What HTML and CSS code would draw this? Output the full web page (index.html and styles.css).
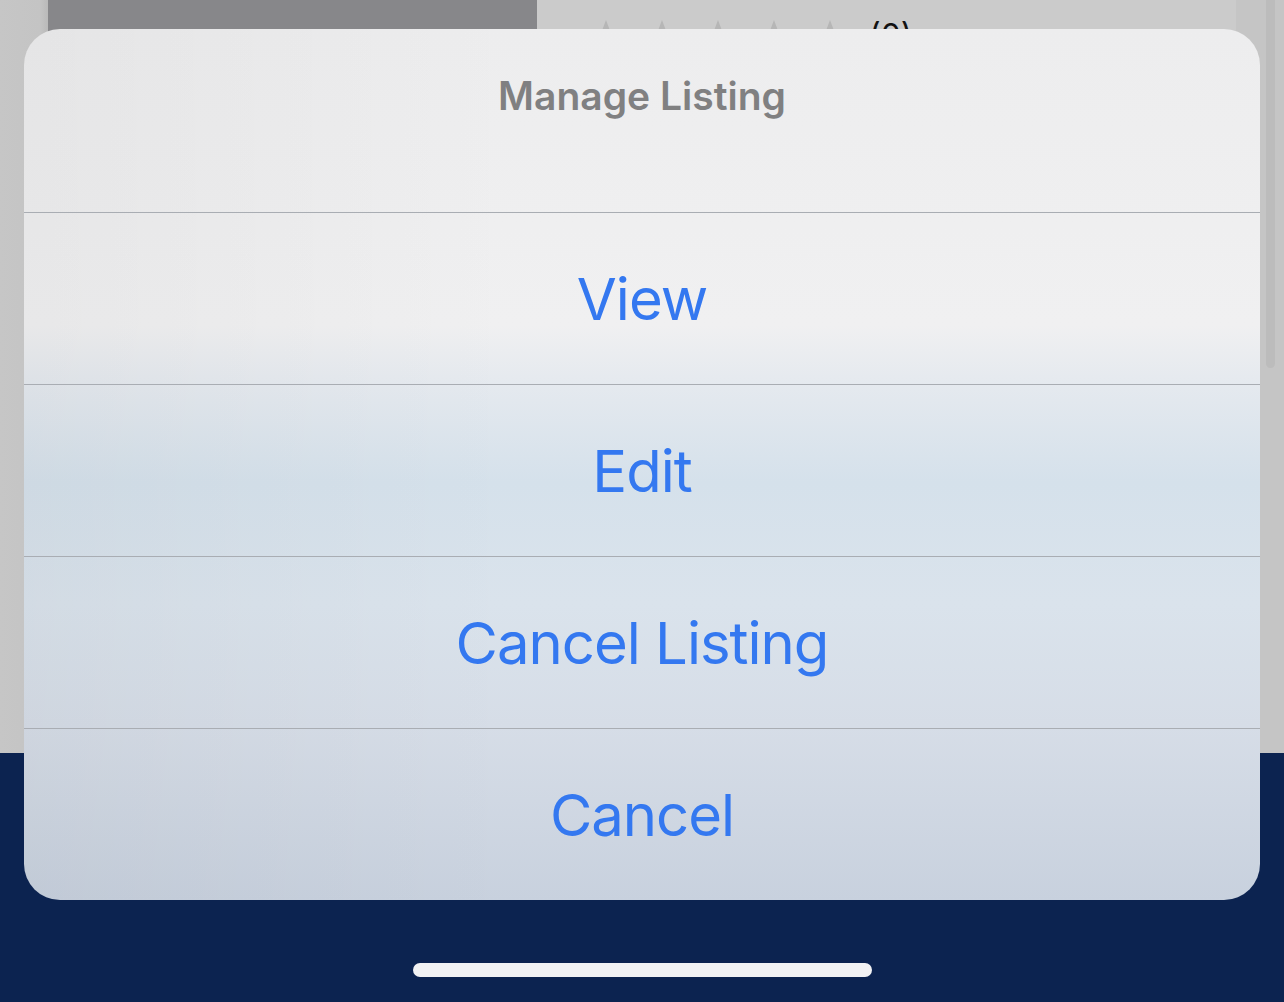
FILE: index.html
```html
<!DOCTYPE html>
<html lang="en">
<head>
  <meta charset="UTF-8">
  <meta name="viewport" content="width=device-width, initial-scale=1.0">
  <title>Manage Listing</title>
  <link rel="stylesheet" href="styles.css">
</head>
<body>
  <div class="screen">
    <div class="backdrop">
      <div class="photo"></div>
      <div class="details">
        <div class="rating">
          <svg class="star" viewBox="0 0 24 24"><path d="M12 0 L15.1 8.3 L24 8.7 L17 14.3 L19.4 23 L12 18 L4.6 23 L7 14.3 L0 8.7 L8.9 8.3 Z"/></svg>
          <svg class="star" viewBox="0 0 24 24"><path d="M12 0 L15.1 8.3 L24 8.7 L17 14.3 L19.4 23 L12 18 L4.6 23 L7 14.3 L0 8.7 L8.9 8.3 Z"/></svg>
          <svg class="star" viewBox="0 0 24 24"><path d="M12 0 L15.1 8.3 L24 8.7 L17 14.3 L19.4 23 L12 18 L4.6 23 L7 14.3 L0 8.7 L8.9 8.3 Z"/></svg>
          <svg class="star" viewBox="0 0 24 24"><path d="M12 0 L15.1 8.3 L24 8.7 L17 14.3 L19.4 23 L12 18 L4.6 23 L7 14.3 L0 8.7 L8.9 8.3 Z"/></svg>
          <svg class="star" viewBox="0 0 24 24"><path d="M12 0 L15.1 8.3 L24 8.7 L17 14.3 L19.4 23 L12 18 L4.6 23 L7 14.3 L0 8.7 L8.9 8.3 Z"/></svg>
          <span class="count">(0)</span>
        </div>
      </div>
      <div class="scroll-track"><div class="scroll-thumb"></div></div>
    </div>

    <div class="tabbar">
      <div class="home-indicator"></div>
    </div>

    <!-- Action sheet -->
    <div class="sheet">
      <div class="sheet-title">Manage Listing</div>
      <div class="sheet-action">View</div>
      <div class="sheet-action">Edit</div>
      <div class="sheet-action">Cancel Listing</div>
      <div class="sheet-action">Cancel</div>
    </div>
  </div>
</body>
</html>
```

FILE: styles.css
```css
* {
  box-sizing: border-box;
}
body {
  margin: 0;
  font-family: Inter, 'Noto Sans', 'Liberation Sans', sans-serif;
  background-color: #0c2350;
}
.screen {
  position: relative;
  width: 1284px;
  height: 1002px;
  overflow: hidden;
}
.backdrop {
  display: flex;
  height: 753px;
  padding-left: 48px;
  background: linear-gradient(to right, #c6c6c6 0, #c4c4c4 40px, #b9b9b9 48px);
}
.photo {
  width: 489px;
  background-color: #87878a;
}
.details {
  flex: 1;
  background-color: #cbcbcb;
  padding: 20px 0 0 49px;
}
.rating {
  display: flex;
  align-items: flex-start;
  gap: 16px;
}
.star {
  width: 40px;
  height: 40px;
  fill: #b6b6b6;
}
.count {
  margin-left: 3px;
  margin-top: -4px;
  font-size: 32px;
  line-height: 40px;
  color: #111;
}
.scroll-track {
  width: 48px;
  background-color: #c5c5c5;
  padding-left: 30px;
}
.scroll-thumb {
  width: 9px;
  height: 368px;
  border-radius: 0 0 5px 5px;
  background-color: #bcbcbc;
}
.tabbar {
  height: 249px;
  background-color: #0c2350;
  display: flex;
  justify-content: center;
  padding-top: 210px;
}
.home-indicator {
  width: 459px;
  height: 14px;
  border-radius: 7px;
  background-color: #f2f2f4;
}
.sheet {
  position: absolute;
  left: 24px;
  top: 29px;
  width: 1236px;
  height: 871px;
  border-radius: 36px;
  overflow: hidden;
  background:
    linear-gradient(to right, rgba(0, 0, 0, 0.035), rgba(0, 0, 0, 0) 40%),
    linear-gradient(to bottom, #ededee 0%, #f0f0f1 34%, #e6eaef 40%, #d5e1eb 52%, #dae3ec 66%, #d6dde7 80%, #c8d1de 100%);
}
.sheet-title {
  height: 183px;
  padding-top: 44px;
  text-align: center;
  font-size: 39px;
  line-height: 46px;
  font-weight: 600;
  color: #808081;
}
.sheet-action {
  height: 172px;
  border-top: 1px solid #a9adb3;
  display: flex;
  align-items: center;
  justify-content: center;
  font-size: 58px;
  letter-spacing: -1px;
  color: #3478f0;
}
```
